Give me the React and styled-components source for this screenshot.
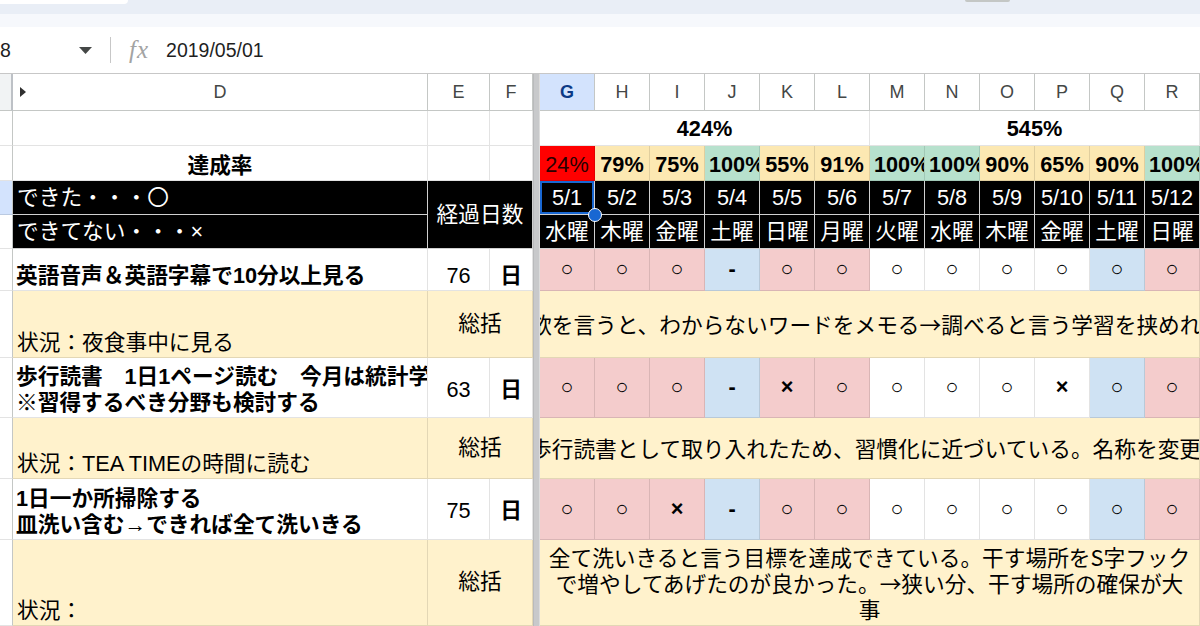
import React from 'react'
import styled, { createGlobalStyle, css } from 'styled-components'

const GlobalStyle = createGlobalStyle`
  *, *::before, *::after { box-sizing: border-box; }
  html, body { margin: 0; padding: 0; background: #fff; }
  body {
    font-family: "Liberation Sans", "Noto Sans CJK JP", sans-serif;
    color: #000;
    overflow: hidden;
  }
`

const tones = {
  white: '#ffffff',
  pink: '#f4cccc',
  blue: '#cfe2f3',
  amber: '#fce8b2',
  green: '#b7e1cd',
  red: '#ff0000',
  cream: '#fff2cc',
}

const COLUMNS = ['G', 'H', 'I', 'J', 'K', 'L', 'M', 'N', 'O', 'P', 'Q', 'R']

const RATES = [
  ['24%', 'red'], ['79%', 'amber'], ['75%', 'amber'], ['100%', 'green'],
  ['55%', 'amber'], ['91%', 'amber'], ['100%', 'green'], ['100%', 'green'],
  ['90%', 'amber'], ['65%', 'amber'], ['90%', 'amber'], ['100%', 'green'],
]

const DATES = COLUMNS.map((_, i) => `5/${i + 1}`)
const DAYS = ['水', '木', '金', '土', '日', '月', '火', '水', '木', '金', '土', '日'].map(d => d + '曜')
const DAY_TONES = ['pink', 'pink', 'pink', 'blue', 'pink', 'pink', 'white', 'white', 'white', 'white', 'blue', 'pink']

const HABITS = [
  {
    row: 6,
    title: '英語音声＆英語字幕で10分以上見る',
    days: 76,
    countAlign: 'bottom',
    marks: ['○', '○', '○', '-', '○', '○', '○', '○', '○', '○', '○', '○'],
    status: '状況：夜食事中に見る',
    note: '欲を言うと、わからないワードをメモる→調べると言う学習を挟めれば',
    shift: 10,
  },
  {
    row: 8,
    title: '歩行読書　1日1ページ読む　今月は統計学\n※習得するべき分野も検討する',
    days: 63,
    countAlign: 'middle',
    marks: ['○', '○', '○', '-', '×', '○', '○', '○', '○', '×', '○', '○'],
    status: '状況：TEA TIMEの時間に読む',
    note: '歩行読書として取り入れたため、習慣化に近づいている。名称を変更して',
    shift: 10,
  },
  {
    row: 10,
    title: '1日一か所掃除する\n皿洗い含む→できれば全て洗いきる',
    days: 75,
    countAlign: 'middle',
    marks: ['○', '○', '×', '-', '○', '○', '○', '○', '○', '○', '○', '○'],
    status: '状況：',
    note: '全て洗いきると言う目標を達成できている。干す場所をS字フックで増やしてあげたのが良かった。→狭い分、干す場所の確保が大事',
    wrap: true,
  },
]

const valign = { top: 'flex-start', middle: 'center', bottom: 'flex-end' }

const Page = styled.div`
  width: 1200px;
  height: 626px;
  overflow: hidden;
  display: flex;
  flex-direction: column;
`

const ChromeBar = styled.div`
  flex: none;
  height: 14px;
  background: #e9eef6;
  display: flex;
  align-items: flex-start;
`

const Omnibox = styled.div`
  width: 128px;
  height: 4px;
  background: #fff;
  border-bottom-right-radius: 8px;
`

const Slit = styled.div`
  width: 45px;
  height: 2px;
  margin-left: 837px;
  background: #c4c7c5;
  border-radius: 0 0 2px 2px;
`

const MenuStrip = styled.div`
  flex: none;
  height: 13px;
  background: #f6f8fc;
`

const FormulaBar = styled.div`
  flex: none;
  height: 46px;
  display: flex;
  align-items: center;
  font-size: 19.5px;
  color: #1f1f1f;
`

const NameBox = styled.div`
  width: 110px;
  display: flex;
  align-items: center;
  justify-content: space-between;
  padding-right: 18px;
`

const Divider = styled.div`
  width: 1px;
  height: 26px;
  background: #c7c7c7;
`

const Fx = styled.span`
  margin-left: 18px;
  font-family: "Liberation Serif", serif;
  font-style: italic;
  font-size: 25px;
  color: #a3a3a3;
  letter-spacing: 1px;
`

const FormulaValue = styled.span`
  margin-left: 17px;
`

const Sheet = styled.div`
  flex: none;
  display: grid;
  grid-template-columns: 13px 415px 62px 43px 7px repeat(12, 55px);
  grid-template-rows: 37px 35px 35px 34px 34px 42px 67px 60px 61px 61px 86px;
  border-top: 1px solid #c7c7c7;
`

const Cell = styled.div`
  grid-column: ${p => p.$col} / span ${p => p.$span || 1};
  grid-row: ${p => p.$row} / span ${p => p.$rows || 1};
  display: flex;
  min-width: 0;
  overflow: hidden;
  white-space: nowrap;
  background: #fff;
  border-right: 1px solid rgba(0, 0, 0, 0.11);
  border-bottom: 1px solid rgba(0, 0, 0, 0.11);
  font-size: 21.7px;
  line-height: 26px;
  padding: 0 4px 1px;
`

const Corner = styled(Cell)`
  background: #f1f3f4;
  border-right: 2px solid #bdc1c6;
  border-bottom-color: #c4c7c5;
`

const ColHead = styled(Cell)`
  align-items: center;
  justify-content: center;
  font-size: 18px;
  color: #444746;
  border-right-color: #c4c7c5;
  border-bottom-color: #c4c7c5;
  ${p => p.$active && css`
    background: #d3e3fd;
    color: #0b3a86;
    font-weight: 700;
  `}
`

const GroupHead = styled(ColHead)`
  justify-content: flex-start;
  padding: 0 13px 0 7px;
`

const HeadLabel = styled.span`
  flex: 1;
  text-align: center;
`

const RowHead = styled(Cell)`
  border-right-color: #c4c7c5;
  background: ${p => (p.$active ? '#d3e3fd' : '#fff')};
`

const FreezeBar = styled.div`
  grid-column: 5;
  grid-row: 1 / span 11;
  background: #c8c9cb;
  border-left: 1px solid #b9babc;
  border-right: 1px solid #dcdcdc;
`

const TotalCell = styled(Cell)`
  align-items: flex-end;
  justify-content: center;
  font-weight: 700;
  padding-bottom: 3px;
`

const TitleCell = styled(Cell)`
  align-items: flex-end;
  justify-content: center;
  font-weight: 700;
`

const RateCell = styled(Cell)`
  align-items: flex-end;
  justify-content: ${p => (p.$wide ? 'flex-start' : 'center')};
  padding-bottom: 2px;
  background: ${p => tones[p.$tone]};
  font-weight: ${p => (p.$tone === 'red' ? 400 : 700)};
  color: ${p => (p.$tone === 'red' ? '#2a0000' : '#000')};
`

const BlackCell = styled(Cell)`
  align-items: center;
  justify-content: center;
  background: #000;
  color: #fff;
  border-right-color: #d0d0d0;
  border-bottom-color: #d0d0d0;
  padding-bottom: 0;
`

const LegendCell = styled(BlackCell)`
  justify-content: flex-start;
`

const DateCell = styled(BlackCell)`
  ${p => p.$selected && css`
    position: relative;
    z-index: 3;
    overflow: visible;
    box-shadow: inset 0 0 0 2px #1967d2;
  `}
`

const FillHandle = styled.span`
  position: absolute;
  right: -8px;
  bottom: -8px;
  width: 14px;
  height: 14px;
  border-radius: 50%;
  background: #1967d2;
  border: 1.5px solid #fff;
`

const TaskCell = styled(Cell)`
  align-items: flex-end;
  white-space: pre;
  font-weight: 700;
  padding-left: 3px;
  padding-right: 0;
`

const CountCell = styled(Cell)`
  align-items: ${p => valign[p.$v]};
  justify-content: center;
  font-weight: ${p => (p.$bold ? 700 : 400)};
  padding-bottom: ${p => (p.$v === 'middle' ? '0' : '1px')};
  ${p => p.$v === 'middle' && css`padding-top: 4px;`}
`

const StatusCell = styled(Cell)`
  align-items: flex-end;
  background: ${tones.cream};
`

const SummaryLabel = styled(Cell)`
  align-items: center;
  justify-content: center;
  background: ${tones.cream};
`

const NoteCell = styled(Cell)`
  align-items: center;
  background: ${tones.cream};
  text-align: center;
  font-family: "Noto Sans CJK JP", "Liberation Sans", sans-serif;
  ${p => (p.$wrap
    ? css`
      justify-content: center;
      white-space: normal;
      padding: 0 6px;
    `
    : css`
      justify-content: flex-start;
      padding: 0;
    `)}
`

const NoteText = styled.span`
  flex: ${p => (p.$wrap ? '0 1 auto' : 'none')};
  margin-left: ${p => (p.$shift ? `-${p.$shift}px` : '0')};
`

const MarkCell = styled(Cell)`
  align-items: center;
  justify-content: center;
  background: ${p => tones[p.$tone]};
  font-weight: ${p => (p.$strong ? 700 : 400)};
`

const Caret = () => (
  <svg width="13" height="7" viewBox="0 0 13 7">
    <path d="M0 0h13L6.5 7z" fill="#444746" />
  </svg>
)

const Expander = () => (
  <svg width="6" height="10" viewBox="0 0 6 10">
    <path d="M0 0l6 5-6 5z" fill="#303030" />
  </svg>
)

const gridCol = i => 6 + i

const HabitRows = ({ habit }) => {
  const { row } = habit
  return (
    <>
      <RowHead $col={1} $row={row} />
      <TaskCell $col={2} $row={row}>{habit.title}</TaskCell>
      <CountCell $col={3} $row={row} $v={habit.countAlign}>{habit.days}</CountCell>
      <CountCell $col={4} $row={row} $v={habit.countAlign} $bold>日</CountCell>
      {habit.marks.map((mark, i) => (
        <MarkCell key={i} $col={gridCol(i)} $row={row} $tone={DAY_TONES[i]} $strong={mark !== '○'}>
          {mark}
        </MarkCell>
      ))}

      <RowHead $col={1} $row={row + 1} />
      <StatusCell $col={2} $row={row + 1}>{habit.status}</StatusCell>
      <SummaryLabel $col={3} $row={row + 1} $span={2}>総括</SummaryLabel>
      <NoteCell $col={6} $row={row + 1} $span={12} $wrap={habit.wrap}>
        <NoteText $shift={habit.shift} $wrap={habit.wrap}>{habit.note}</NoteText>
      </NoteCell>
    </>
  )
}

const App = () => (
  <>
    <GlobalStyle />
    <Page>
      <ChromeBar>
        <Omnibox />
        <Slit />
      </ChromeBar>
      <MenuStrip />

      <FormulaBar>
        <NameBox>
          <span>8</span>
          <Caret />
        </NameBox>
        <Divider />
        <Fx>fx</Fx>
        <FormulaValue>2019/05/01</FormulaValue>
      </FormulaBar>

      <Sheet>
        <Corner $col={1} $row={1} />
        <GroupHead $col={2} $row={1}>
          <Expander />
          <HeadLabel>D</HeadLabel>
        </GroupHead>
        <ColHead $col={3} $row={1}>E</ColHead>
        <ColHead $col={4} $row={1}>F</ColHead>
        {COLUMNS.map((c, i) => (
          <ColHead key={c} $col={gridCol(i)} $row={1} $active={c === 'G'}>{c}</ColHead>
        ))}

        <FreezeBar />

        {/* weekly totals */}
        <RowHead $col={1} $row={2} />
        <Cell $col={2} $row={2} />
        <Cell $col={3} $row={2} />
        <Cell $col={4} $row={2} />
        <TotalCell $col={6} $row={2} $span={6}>424%</TotalCell>
        <TotalCell $col={12} $row={2} $span={6}>545%</TotalCell>

        {/* daily achievement rate */}
        <RowHead $col={1} $row={3} />
        <TitleCell $col={2} $row={3}>達成率</TitleCell>
        <Cell $col={3} $row={3} />
        <Cell $col={4} $row={3} />
        {RATES.map(([value, tone], i) => (
          <RateCell key={i} $col={gridCol(i)} $row={3} $tone={tone} $wide={value.length > 3}>
            {value}
          </RateCell>
        ))}

        {/* legend, dates and weekdays */}
        <RowHead $col={1} $row={4} $active />
        <LegendCell $col={2} $row={4}>できた・・・〇</LegendCell>
        <BlackCell $col={3} $row={4} $span={2} $rows={2}>経過日数</BlackCell>
        {DATES.map((d, i) => (
          <DateCell key={d} $col={gridCol(i)} $row={4} $selected={i === 0}>
            {d}
            {i === 0 && <FillHandle />}
          </DateCell>
        ))}

        <RowHead $col={1} $row={5} />
        <LegendCell $col={2} $row={5}>できてない・・・×</LegendCell>
        {DAYS.map((d, i) => (
          <BlackCell key={i} $col={gridCol(i)} $row={5}>{d}</BlackCell>
        ))}

        {HABITS.map(h => <HabitRows key={h.row} habit={h} />)}
      </Sheet>
    </Page>
  </>
)

export default App
